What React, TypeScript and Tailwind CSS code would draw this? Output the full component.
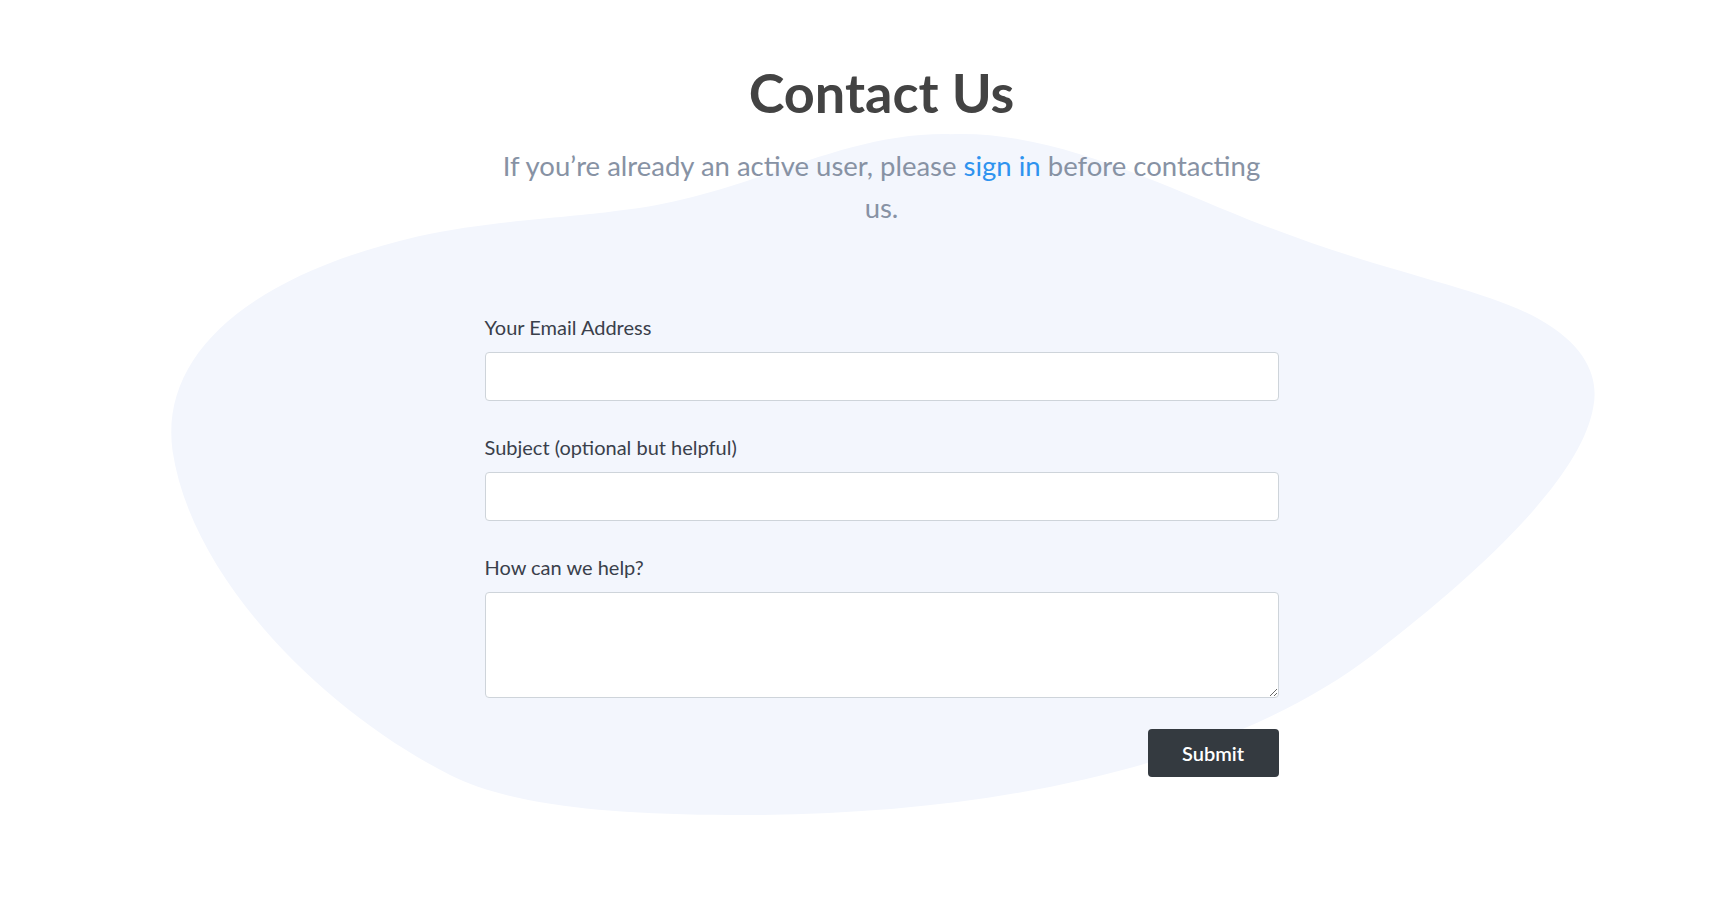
import React from "react"

function Blob() {
  return (
    <svg
      aria-hidden="true"
      className="pointer-events-none absolute left-0 top-0 h-[906px] w-[1723px]"
      viewBox="0 0 1568 824"
      preserveAspectRatio="none"
    >
      <path
        fill="#f3f6fd"
        d="M 865 122
           C 960 118, 1060 170, 1150 205
           C 1260 248, 1350 262, 1400 290
           C 1445 315, 1455 345, 1450 370
           C 1440 430, 1360 510, 1250 595
           C 1120 695, 900 745, 650 741
           C 540 740, 460 730, 410 705
           C 300 650, 175 530, 157 410
           C 145 320, 230 250, 380 215
           C 450 200, 520 198, 560 192
           C 680 180, 760 120, 865 122 Z"
      />
    </svg>
  )
}

function Field({ label, id, area }: { label: string; id: string; area?: boolean }) {
  return (
    <div className="flex flex-col">
      <label className="mb-2.5 text-[20px] leading-[30px] text-[#3a3f4b]" htmlFor={id}>
        {label}
      </label>
      {area ? (
        <textarea
          className="h-[106px] w-full rounded border border-[#ced4da] bg-white px-3 py-2 text-[18px] outline-none"
          id={id}
        />
      ) : (
        <input
          className="h-[49px] w-full rounded border border-[#ced4da] bg-white px-3 text-[18px] outline-none"
          id={id}
          type="text"
        />
      )}
    </div>
  )
}

export default function App() {
  return (
    <div
      className="relative min-h-[906px] overflow-hidden bg-white pl-10"
      style={{ fontFamily: "Lato, 'Open Sans', sans-serif" }}
    >
      <Blob />
      <main className="relative mx-auto flex w-[794px] flex-col items-center pt-[61px]">
        <h1 className="text-[54px] font-bold leading-[1.2] text-[#434343]">Contact Us</h1>
        <p className="mt-[19px] text-center text-[27.5px] leading-[42px] text-[#8792a4]">
          If you’re already an active user, please <a className="text-[#2e93ef]" href="#">sign in</a> before
          contacting us.
        </p>
        <form className="mt-[83px] flex w-full flex-col gap-[31px]">
          <Field id="email" label="Your Email Address" />
          <Field id="subject" label="Subject (optional but helpful)" />
          <Field area id="help" label="How can we help?" />
          <div className="flex justify-end">
            <button
              className="h-[48px] w-[131px] rounded bg-[#343a40] text-[20px] font-semibold text-white"
              type="button"
            >
              Submit
            </button>
          </div>
        </form>
      </main>
    </div>
  )
}
